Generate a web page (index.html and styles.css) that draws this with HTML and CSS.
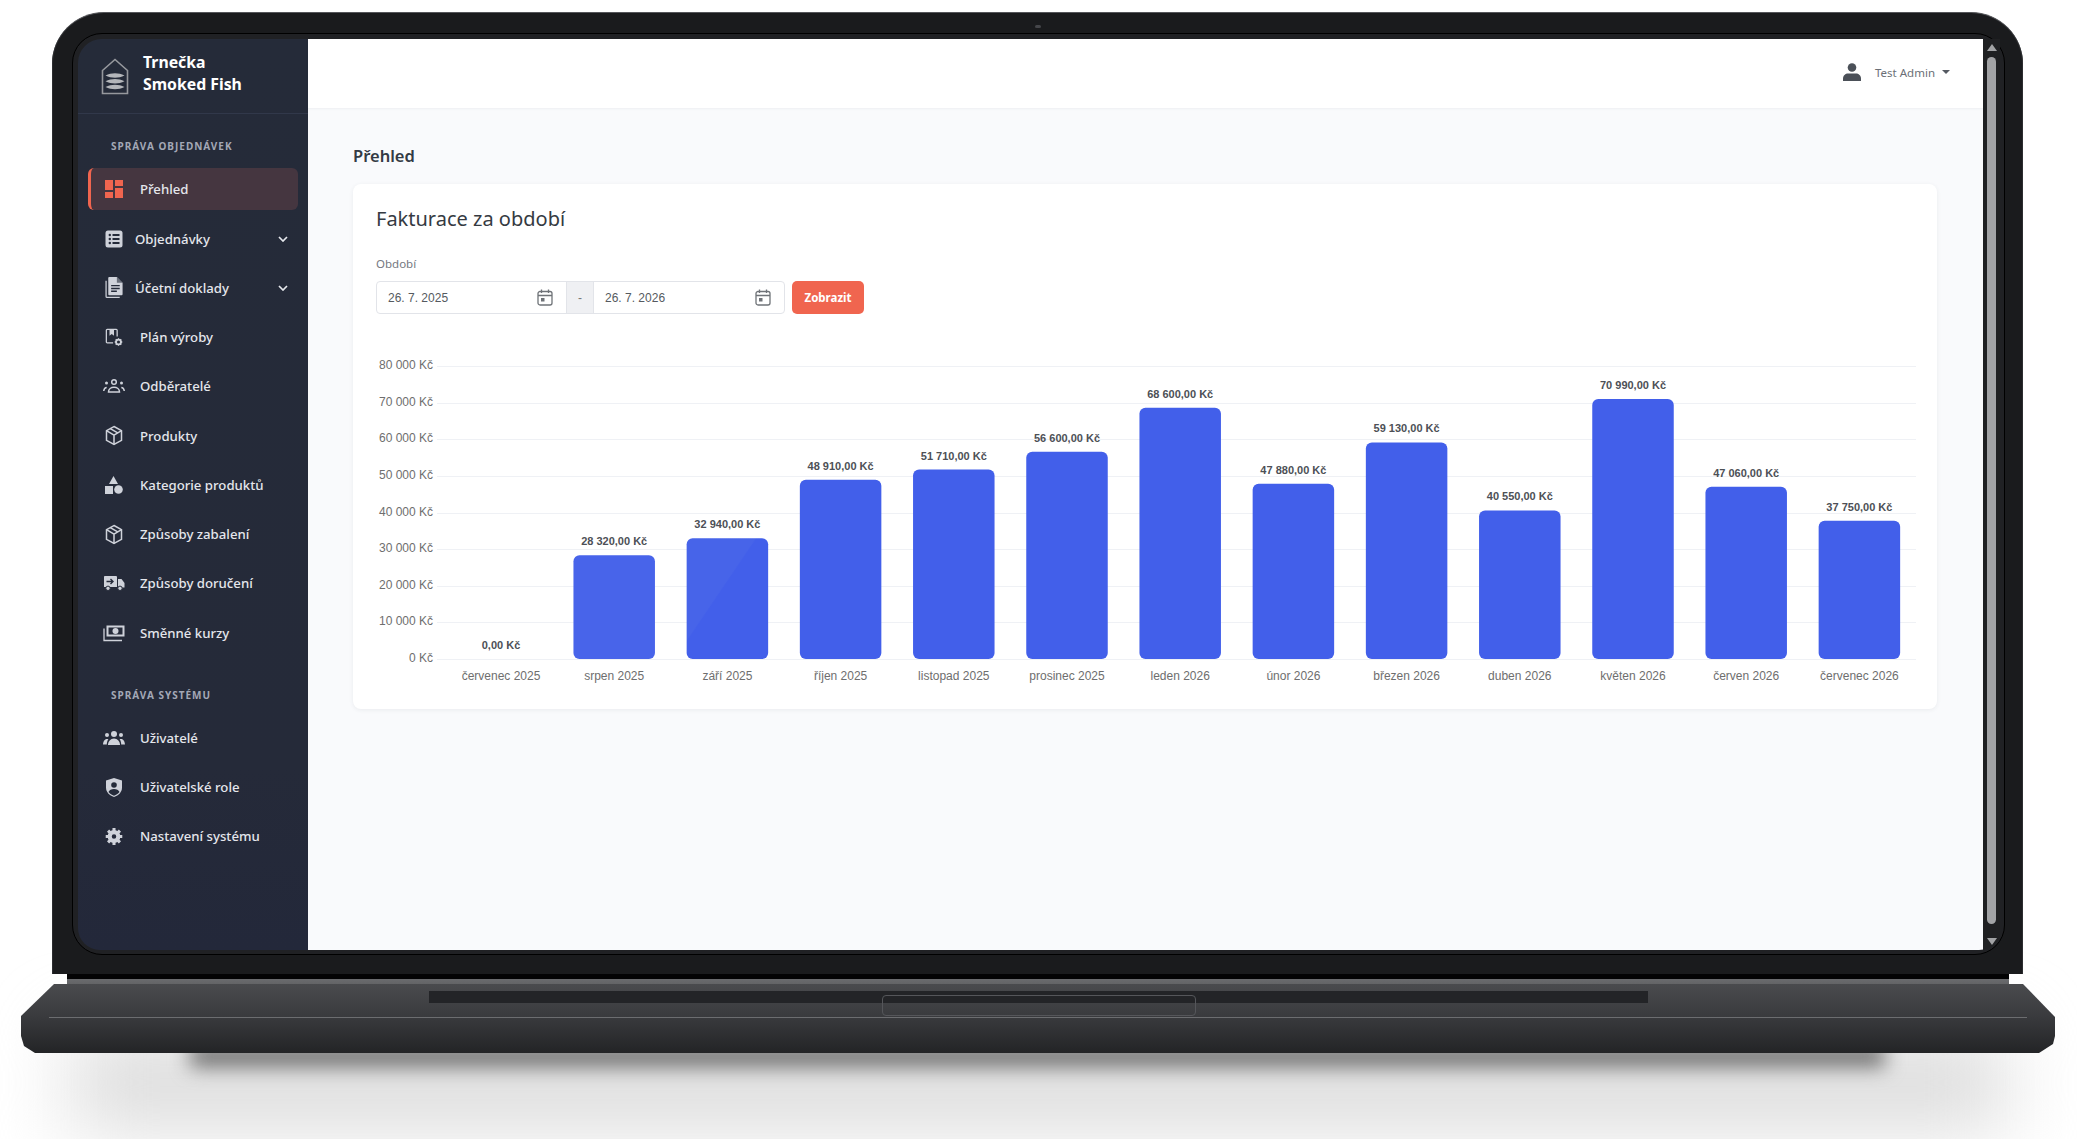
FILE: index.html
```html
<!DOCTYPE html>
<html lang="cs">
<head>
  <meta charset="UTF-8" />
  <title>Trnečka Smoked Fish - Přehled</title>
  <link rel="stylesheet" href="styles.css">
</head>
<body>
  <div class="floor-shadow"></div>
  <div class="floor-shadow-dark"></div>

  <div class="laptop">
    <div class="lid">
      <div class="camera"></div>
      <div class="bezel">
        <div class="screen">

          <aside class="sidebar">
            <div class="brand">
              <svg class="brand-logo" viewBox="0 0 28 37" fill="none" stroke="#96989d" stroke-width="1.600">
                <path d="M1.500 12.500 14 1.500 26.500 12.500V35.500H1.500Z"/>
                <path d="M4.500 17.500c6-3 13-3 19 0-6 3-13 3-19 0Z" fill="#b4b6ba" stroke="none"/>
                <path d="M4.500 23.200c6-3 13-3 19 0-6 3-13 3-19 0Z" fill="#b4b6ba" stroke="none"/>
                <path d="M4.500 28.900c6-3 13-3 19 0-6 3-13 3-19 0Z" fill="#b4b6ba" stroke="none"/>
              </svg>
              <div class="brand-name">Trnečka<br>Smoked Fish</div>
            </div>

            <div class="nav-title">Správa objednávek</div>
            <nav class="nav">
              <a class="nav-item active">
                <svg class="nav-icon" viewBox="3 3 18 18" fill="#f0654f"><path d="M3 13h8V3H3v10zm0 8h8v-6H3v6zm10 0h8V11h-8v10zm0-18v6h8V3h-8z"/></svg>
                <span>Přehled</span>
              </a>
              <a class="nav-item has-sub">
                <svg class="nav-icon" viewBox="0 0 18 18"><rect x="0.500" y="0.500" width="17" height="17" rx="2.500" fill="#cfd2da"/><g fill="#252b3a"><circle cx="4.800" cy="5" r="1.200"/><circle cx="4.800" cy="9" r="1.200"/><circle cx="4.800" cy="13" r="1.200"/><rect x="7.500" y="4" width="7" height="2"/><rect x="7.500" y="8" width="7" height="2"/><rect x="7.500" y="12" width="7" height="2"/></g></svg>
                <span>Objednávky</span>
                <svg class="chevron" viewBox="0 0 10 6" fill="none" stroke="#e6e8ed" stroke-width="1.700"><path d="M1 1l4 4 4-4"/></svg>
              </a>
              <a class="nav-item has-sub">
                <svg class="nav-icon tall" viewBox="0 0 18 22"><path d="M4 0h8l6 6v12a1 1 0 0 1-1 1H4a1 1 0 0 1-1-1V1a1 1 0 0 1 1-1Z" fill="#cfd2da"/><path d="M12 0v6h6" fill="#252b3a" opacity=".6"/><path d="M6 9h9M6 12h9M6 15h6" stroke="#252b3a" stroke-width="1.500"/><path d="M.7 4v16.300a1 1 0 0 0 1 1H15" fill="none" stroke="#cfd2da" stroke-width="1.300"/></svg>
                <span>Účetní doklady</span>
                <svg class="chevron" viewBox="0 0 10 6" fill="none" stroke="#e6e8ed" stroke-width="1.700"><path d="M1 1l4 4 4-4"/></svg>
              </a>
              <a class="nav-item">
                <svg class="nav-icon tall" viewBox="0 0 20 20"><path d="M9 16H2.500a1 1 0 0 1-1-1V2a1 1 0 0 1 1-1h10a1 1 0 0 1 1 1v7" fill="none" stroke="#cfd2da" stroke-width="1.400"/><path d="M5 1.500h5V8L7.500 6 5 8Z" fill="#cfd2da"/><circle cx="15" cy="15" r="2.700" fill="none" stroke="#cfd2da" stroke-width="2"/><path d="M15 10.800v1.500M15 17.700v1.500M10.800 15h1.500M17.700 15h1.500M12 12l1 1M17 17l1 1M18 12l-1 1M13 17l-1 1" stroke="#cfd2da" stroke-width="1.500"/></svg>
                <span>Plán výroby</span>
              </a>
              <a class="nav-item">
                <svg class="nav-icon wide" viewBox="0 0 22 16" fill="none" stroke="#cfd2da" stroke-width="1.500"><circle cx="11" cy="4" r="2.300"/><path d="M5.500 14c0-3 2.500-4.700 5.500-4.700s5.500 1.700 5.500 4.700Z"/><circle cx="3.500" cy="5" r="1.500" fill="#cfd2da" stroke="none"/><circle cx="18.500" cy="5" r="1.500" fill="#cfd2da" stroke="none"/><path d="M.7 13c.3-2 1.300-3.500 3-3.500M21.300 13c-.3-2-1.300-3.500-3-3.500"/></svg>
                <span>Odběratelé</span>
              </a>
              <a class="nav-item">
                <svg class="nav-icon tall" viewBox="0 0 18 20" fill="none" stroke="#cfd2da" stroke-width="1.500"><path d="M9 1l7.500 4.200v9.600L9 19l-7.500-4.200V5.200Z"/><path d="M1.500 5.200 9 9.600l7.500-4.400M9 9.600V19M5.300 3.100l7.400 4.300"/></svg>
                <span>Produkty</span>
              </a>
              <a class="nav-item">
                <svg class="nav-icon" viewBox="0 0 18 18" fill="#cfd2da"><path d="M8.500 0l4.500 8H4Z"/><rect x="0" y="10" width="8" height="8"/><circle cx="13.500" cy="13.500" r="4.300"/></svg>
                <span>Kategorie produktů</span>
              </a>
              <a class="nav-item">
                <svg class="nav-icon tall" viewBox="0 0 18 20" fill="none" stroke="#cfd2da" stroke-width="1.500"><path d="M9 1l7.500 4.200v9.600L9 19l-7.500-4.200V5.200Z"/><path d="M1.500 5.200 9 9.600l7.500-4.400M9 9.600V19M5.300 3.100l7.400 4.300"/></svg>
                <span>Způsoby zabalení</span>
              </a>
              <a class="nav-item">
                <svg class="nav-icon wide" viewBox="0 0 22 16"><path d="M1.500 1H13a1 1 0 0 1 1 1v10H1V1.500Z" fill="#cfd2da"/><path d="M15 4h3.500L21.500 8v4.500H15Z" fill="#cfd2da"/><path d="M3.500 6.500h6M7.500 4l2.500 2.500L7.500 9" fill="none" stroke="#252b3a" stroke-width="1.400"/><circle cx="5" cy="13.300" r="2.200" fill="#cfd2da" stroke="#252b3a"/><circle cx="17" cy="13.300" r="2.200" fill="#cfd2da" stroke="#252b3a"/></svg>
                <span>Způsoby doručení</span>
              </a>
              <a class="nav-item">
                <svg class="nav-icon wide" viewBox="0 0 22 17"><path fill-rule="evenodd" d="M3.500 1h18v11h-18Zm2 2v7h14V3Z" fill="#cfd2da"/><circle cx="12.500" cy="6.500" r="3" fill="#cfd2da"/><path d="M1 4v12h18" fill="none" stroke="#cfd2da" stroke-width="1.300"/></svg>
                <span>Směnné kurzy</span>
              </a>
            </nav>

            <div class="nav-title second">Správa systému</div>
            <nav class="nav">
              <a class="nav-item">
                <svg class="nav-icon wide" viewBox="0 0 22 14" fill="#cfd2da"><circle cx="11" cy="3" r="3"/><path d="M5 14c0-3.500 2.500-6.500 6-6.500s6 3 6 6.500Z"/><circle cx="4" cy="4" r="2"/><circle cx="18" cy="4" r="2"/><path d="M0 13.500c.2-3 1.500-5.500 4-5.500.5 0 1 .1 1.400.3C4.300 9.700 3.800 11.500 3.800 13.500ZM22 13.500c-.2-3-1.500-5.500-4-5.500-.5 0-1 .1-1.400.3 1.100 1.400 1.600 3.200 1.600 5.200Z"/></svg>
                <span>Uživatelé</span>
              </a>
              <a class="nav-item">
                <svg class="nav-icon tall" viewBox="0 0 18 20"><path d="M9 .500 17 3v7c0 4.500-3.300 8-8 9.500C4.300 18 1 14.500 1 10V3Z" fill="#cfd2da"/><circle cx="9" cy="7.500" r="2.800" fill="#252b3a"/><path d="M3.500 14.500c.8-2 3-3 5.500-3s4.700 1 5.500 3C13 16.300 11.200 17.500 9 18.300c-2.200-.8-4-2-5.500-3.800Z" fill="#252b3a"/></svg>
                <span>Uživatelské role</span>
              </a>
              <a class="nav-item">
                <svg class="nav-icon tall" viewBox="0 0 20 20"><circle cx="10" cy="10" r="4.800" fill="none" stroke="#cfd2da" stroke-width="4.600"/><path d="M10 .5v4M10 15.500v4M.8 10h4M15.200 10h4M3.400 3.400l2.900 2.900M13.700 13.700l2.900 2.900M16.600 3.400l-2.900 2.900M6.300 13.700l-2.900 2.900" stroke="#cfd2da" stroke-width="3.400"/></svg>
                <span>Nastavení systému</span>
              </a>
            </nav>
          </aside>

          <div class="main">
            <header class="topbar">
              <svg class="user-icon" viewBox="0 0 18 18" fill="#4b5058"><circle cx="9" cy="4.500" r="4.300"/><path d="M0 18v-2.500C0 12.500 2.500 10.500 5 10.500h8c2.500 0 5 2 5 5V18Z"/></svg>
              <span class="user-name">Test Admin</span>
              <span class="caret"></span>
            </header>

            <div class="content">
              <h1 class="page-title">Přehled</h1>
              <section class="card">
                <h2 class="card-title">Fakturace za období</h2>
                <label class="field-label">Období</label>
                <div class="filter">
                  <div class="range">
                    <div class="date-input">
                      <span>26. 7. 2025</span>
                      <svg class="cal" viewBox="0 0 16 17" fill="none" stroke="#6f7378" stroke-width="1.300"><rect x="1" y="2.500" width="14" height="13.500" rx="2"/><path d="M1 6.500h14M4.500 .5v3.500M11.500 .5v3.500"/><rect x="4" y="9" width="3.500" height="3.500" fill="#6f7378" stroke="none"/></svg>
                    </div>
                    <div class="range-sep">-</div>
                    <div class="date-input">
                      <span>26. 7. 2026</span>
                      <svg class="cal" viewBox="0 0 16 17" fill="none" stroke="#6f7378" stroke-width="1.300"><rect x="1" y="2.500" width="14" height="13.500" rx="2"/><path d="M1 6.500h14M4.500 .5v3.500M11.500 .5v3.500"/><rect x="4" y="9" width="3.500" height="3.500" fill="#6f7378" stroke="none"/></svg>
                    </div>
                  </div>
                  <button class="btn-show">Zobrazit</button>
                </div>
                <div id="chart" class="chart"></div>
              </section>
            </div>
          </div>

          <div class="scrollbar">
            <span class="arrow-up"></span>
            <span class="thumb"></span>
            <span class="arrow-down"></span>
          </div>
        </div>
      </div>
    </div>

    <div class="hinge"></div>
    <div class="base">
      <div class="slot"></div>
      <div class="notch"></div>
      <div class="base-line"></div>
    </div>
  </div>

  <script src="chart.js"></script>
</body>
</html>
```

FILE: styles.css
```css
html, body {
  margin: 0;
  height: 100%;
}

body {
  position: relative;
  width: 2077px;
  height: 1139px;
  overflow: hidden;
  background: #fff;
  font-family: "Noto Sans", Arial, sans-serif;
}

* {
  box-sizing: border-box;
}

/* laptop shell */
.laptop {
  position: relative;
  padding-top: 12px;
  display: flex;
  flex-direction: column;
}

.lid {
  position: relative;
  width: 1971px;
  height: 962px;
  margin-left: 52px;
  padding: 20px 18px 19px 20px;
  background: #1a1b1d;
  border-top: 1px solid #55565a;
  border-radius: 52px 52px 0 0;
  box-shadow: inset 1px 0 0 #2c2d30, inset -1px 0 0 #2c2d30;
}

.camera {
  position: absolute;
  top: 12px;
  left: 983px;
  width: 6px;
  height: 3px;
  border-radius: 2px;
  background: #45464a;
}

.bezel {
  height: 100%;
  padding: 5px 3px 5px 5px;
  border: 1px solid #000;
  border-radius: 30px;
  background: #202124;
}

.screen {
  display: flex;
  height: 911px;
  overflow: hidden;
  border-radius: 24px 0 22px 22px;
}

.hinge {
  width: 1942px;
  height: 10px;
  margin-left: 67px;
  background: linear-gradient(#030304 0, #030304 50%, #6a6b6e 50%, #636466 100%);
}

.base {
  position: relative;
  width: 2034px;
  height: 69px;
  margin-left: 21px;
  background: linear-gradient(#4a4b4e 0, #3a3b3e 45%, #36373a 55%, #232426 100%);
  clip-path: polygon(33px 0, 2002px 0, 2034px 33px, 2034px 52px, 2032px 60px, 2018px 69px, 14px 69px, 3px 62px, 0 52px, 0 32px);
}

.slot {
  position: absolute;
  top: 7px;
  left: 408px;
  width: 1219px;
  height: 12px;
  background: #232427;
}

.notch {
  position: absolute;
  top: 11px;
  left: 861px;
  width: 314px;
  height: 21px;
  border: 1px solid #55565a;
  border-radius: 4px;
}

.base-line {
  position: absolute;
  top: 33px;
  left: 28px;
  right: 28px;
  height: 1px;
  background: #6c6d70;
}

.floor-shadow {
  position: absolute;
  top: 1035px;
  left: 70px;
  width: 1937px;
  height: 95px;
  background: #dcdcdc;
  filter: blur(38px);
}

.floor-shadow-dark {
  position: absolute;
  top: 1045px;
  left: 190px;
  width: 1695px;
  height: 22px;
  background: #6f6f6f;
  filter: blur(10px);
}

/* sidebar */
.sidebar {
  width: 230px;
  flex-shrink: 0;
  background: linear-gradient(#252b39, #252a39 80%, #23283a);
  color: #e4e6ec;
}

.brand {
  display: flex;
  align-items: center;
  height: 75px;
  padding: 0 0 0 23px;
  border-bottom: 1px solid #31384a;
}

.brand-logo {
  width: 28px;
  height: 37px;
  margin-right: 14px;
}

.brand-name {
  margin-bottom: 6px;
  font-size: 15.800px;
  line-height: 22px;
  font-weight: 700;
  color: #fff;
}

.nav-title {
  margin: 24px 0 0 33px;
  height: 16px;
  font-size: 10px;
  line-height: 16px;
  font-weight: 700;
  letter-spacing: 1px;
  text-transform: uppercase;
  color: #a3a8b6;
}

.nav-title.second {
  margin-top: 33px;
  margin-bottom: 0;
}

.nav {
  display: flex;
  flex-direction: column;
  gap: 7.250px;
  margin-top: 14.300px;
  padding: 0 10px;
}

.nav-item {
  display: flex;
  align-items: center;
  height: 42px;
  padding-left: 17px;
  font-size: 13.200px;
  font-weight: 500;
  color: #e4e6ec;
  border-radius: 6px;
}

.nav-item.active {
  background: #453640;
  border-left: 3px solid #f0654f;
  padding-left: 14px;
}

.nav-icon {
  width: 18px;
  height: 18px;
  margin-right: 17px;
  flex-shrink: 0;
}

.nav-icon.tall {
  height: 21px;
}

.nav-icon.wide {
  width: 22px;
  margin: 0 15px 0 -2px;
}

.has-sub .nav-icon {
  margin-right: 12px;
}

.chevron {
  width: 10px;
  height: 6px;
  margin-left: auto;
  margin-right: 10px;
}

/* main area */
.main {
  width: 1675px;
  flex-shrink: 0;
  background: #f9fafc;
}

.topbar {
  display: flex;
  align-items: center;
  height: 69px;
  padding: 0 33px 3px 0;
  justify-content: flex-end;
  background: #fff;
  box-shadow: 0 1px 2px rgba(50,60,80,0.06);
}

.user-icon {
  width: 18px;
  height: 18px;
  margin-right: 14px;
}

.user-name {
  font-size: 11.500px;
  color: #6b6f76;
}

.caret {
  width: 0;
  height: 0;
  margin-left: 7px;
  border-left: 4px solid transparent;
  border-right: 4px solid transparent;
  border-top: 4px solid #555a62;
}

.content {
  padding: 37px 45px 0;
}

.page-title {
  margin: 0 0 18px;
  height: 21px;
  font-size: 16.500px;
  line-height: 21px;
  font-weight: 600;
  color: #333a44;
}

.card {
  width: 1584px;
  height: 525px;
  padding: 19px 23px 0;
  background: #fff;
  border-radius: 8px;
  box-shadow: 0 1px 4px rgba(50,60,80,0.08);
}

.card-title {
  margin: 0;
  height: 32px;
  font-size: 20px;
  line-height: 32px;
  font-weight: 400;
  color: #353a42;
}

.field-label {
  display: block;
  margin-top: 21px;
  height: 16px;
  font-size: 11.500px;
  line-height: 16px;
  color: #74787f;
}

.filter {
  display: flex;
  gap: 7px;
  margin-top: 9px;
}

.range {
  display: flex;
  width: 409px;
  height: 33px;
  border: 1px solid #e2e4e9;
  border-radius: 4px;
  font-family: "Liberation Sans", Arial, sans-serif;
  font-size: 12px;
  color: #555a60;
}

.date-input {
  flex: 1;
  display: flex;
  align-items: center;
  justify-content: space-between;
  padding: 0 13px 0 11px;
}

.date-input:first-child {
  flex: 0 0 189px;
}

.cal {
  width: 16px;
  height: 17px;
}

.range-sep {
  width: 28px;
  display: flex;
  align-items: center;
  justify-content: center;
  background: #eff0f3;
  border-left: 1px solid #e2e4e9;
  border-right: 1px solid #e2e4e9;
  color: #777;
}

.btn-show {
  width: 72px;
  height: 33px;
  padding: 0;
  border: none;
  border-radius: 5px;
  background: #f0654f;
  color: #fff;
  font-family: "Noto Sans", Arial, sans-serif;
  font-size: 11.500px;
  font-weight: 700;
}

.chart {
  width: 1584px;
  height: 394px;
  margin: 0 0 0 -23px;
}

.chart svg {
  display: block;
}

.grid-line {
  stroke: #eff1f5;
  stroke-width: 1;
}

.axis-label {
  font: 12px "Liberation Sans", Arial, sans-serif;
  fill: #6e6e6e;
}

.value-label {
  font: bold 11px "Liberation Sans", Arial, sans-serif;
  fill: #4d5056;
}

.bar {
  fill: #425fea;
}

/* scrollbar */
.scrollbar {
  position: relative;
  width: 17px;
  flex-shrink: 0;
  display: flex;
  flex-direction: column;
  align-items: center;
  padding: 5px 0 5px 0;
  background: #1f2022;
}

.thumb {
  flex: 1;
  width: 9px;
  margin: 6px 0 14px;
  border-radius: 5px;
  background: #a2a3a5;
}

.arrow-up,
.arrow-down {
  width: 0;
  height: 0;
  border-left: 5px solid transparent;
  border-right: 5px solid transparent;
}

.arrow-up {
  border-bottom: 7px solid #a2a3a5;
}

.arrow-down {
  border-top: 7px solid #a2a3a5;
}
```

FILE: chart.js
```js
var months = [
  ["červenec 2025", 0, "0,00 Kč"],
  ["srpen 2025", 28320, "28 320,00 Kč"],
  ["září 2025", 32940, "32 940,00 Kč"],
  ["říjen 2025", 48910, "48 910,00 Kč"],
  ["listopad 2025", 51710, "51 710,00 Kč"],
  ["prosinec 2025", 56600, "56 600,00 Kč"],
  ["leden 2026", 68600, "68 600,00 Kč"],
  ["únor 2026", 47880, "47 880,00 Kč"],
  ["březen 2026", 59130, "59 130,00 Kč"],
  ["duben 2026", 40550, "40 550,00 Kč"],
  ["květen 2026", 70990, "70 990,00 Kč"],
  ["červen 2026", 47060, "47 060,00 Kč"],
  ["červenec 2026", 37750, "37 750,00 Kč"]
];

var zeroY = 345;
var plotH = 293;
var step = 113.2;
var firstX = 148;
var barW = 81.5;

var html = '<svg width="1584" height="394">';

// the september bar has a lighter corner in the screenshot
html += '<defs><linearGradient id="sheen" x1="0" y1="0" x2="1" y2="1">' +
  '<stop offset="0" stop-color="#4764e9"/><stop offset="0.42" stop-color="#4764e9"/>' +
  '<stop offset="0.43" stop-color="#425fea"/></linearGradient></defs>';

for (var i = 0; i <= 8; i++) {
  var y = Math.round(zeroY - plotH * i / 8) + 0.5;
  var label = i == 0 ? "0 Kč" : (i * 10) + " 000 Kč";
  html += '<line class="grid-line" x1="84" x2="1563" y1="' + y + '" y2="' + y + '"/>';
  html += '<text class="axis-label" x="80" y="' + (y + 2.5) + '" text-anchor="end">' + label + '</text>';
}

months.forEach(function (m, i) {
  var cx = firstX + step * i;
  var h = m[1] / 80000 * plotH;
  if (h > 0) {
    var fill = "";
    if (i == 1) fill = ' style="fill:#4864ea"';
    if (i == 2) fill = ' style="fill:url(#sheen)"';
    html += '<rect class="bar"' + fill + ' x="' + (cx - barW / 2) + '" y="' + (zeroY - h) + '" width="' + barW + '" height="' + h + '" rx="6"/>';
  }
  html += '<text class="value-label" x="' + cx + '" y="' + (zeroY - h - 10) + '" text-anchor="middle">' + m[2] + '</text>';
  html += '<text class="axis-label" x="' + cx + '" y="' + (zeroY + 21) + '" text-anchor="middle">' + m[0] + '</text>';
});

html += '</svg>';
document.getElementById("chart").innerHTML = html;
```
